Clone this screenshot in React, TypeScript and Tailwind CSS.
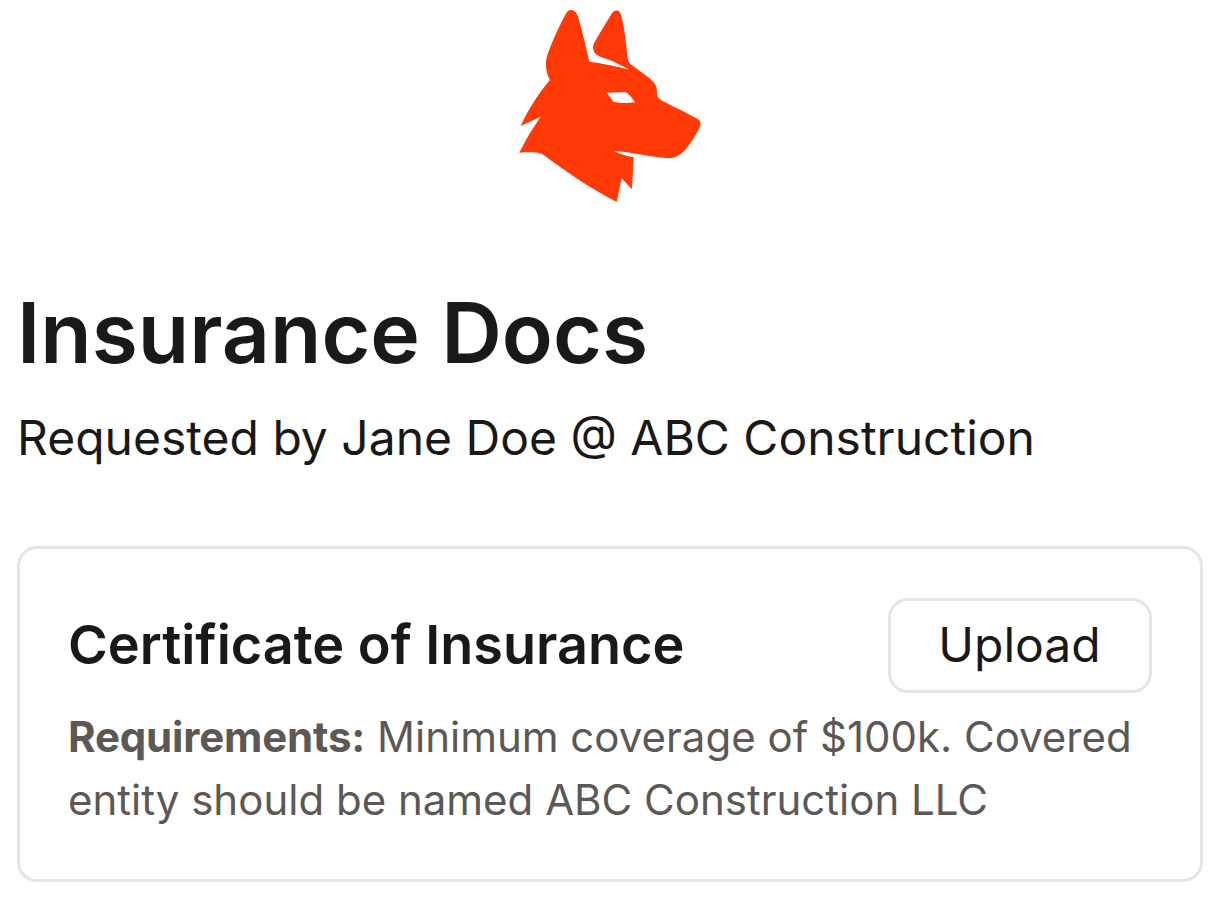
export default function App() {
  return (
    <div className="min-h-[902px] bg-white pl-[17px] pr-[17.5px] font-['Inter',sans-serif] text-[#1a1917]">
      {/* logo */}
      <div className="flex justify-center">
        <svg width="220" height="215" viewBox="0 0 660 645" className="block">
          <path
            fill="#ff3a06"
            d="M213 30 C226 30 232 42 236 56 C248 96 258 142 268 185 C310 191 350 198 387 209 C365 197 335 180 305 172 C285 166 273 150 282 130 C300 98 320 66 336 40 C344 28 358 28 363 44 C373 80 378 125 383 172 C384 186 392 194 402 200 C425 216 445 230 460 245 C470 256 472 268 471 282 C472 294 482 300 494 306 C530 324 562 340 592 356 C602 362 604 370 600 380 C590 400 576 424 560 444 C546 462 530 474 505 475 C450 470 395 456 340 452 C360 462 380 468 401 472 L396 568 L365 535 L350 605 C280 570 205 520 130 464 C118 456 90 456 58 458 C76 420 98 384 122 350 L62 378 C84 330 114 282 150 240 C138 220 134 190 142 165 C158 120 178 78 196 44 C201 34 206 30 213 30 Z M321 278 L340 305 C360 310 385 310 405 307 C398 296 388 284 378 277 C360 276 340 277 321 278 Z"
            fillRule="evenodd"
          />
        </svg>
      </div>

      <h1 className="mt-[68px] text-[84px] leading-[100px] font-semibold">Insurance Docs</h1>
      <p className="mt-[25px] text-[48px] leading-[60px]">Requested by Jane Doe @ ABC Construction</p>

      <div className="mt-[78px] h-[336px] rounded-[20px] border-[3px] border-[#e7e5e4] px-[48px] pt-[49px]">
        <div className="flex items-start justify-between">
          <h2 className="mt-[15px] text-[54px] leading-[64px] font-semibold">Certificate of Insurance</h2>
          <button className="h-[95px] w-[264px] rounded-[20px] border-[3px] border-[#e7e5e4] pb-[2px] text-[48px]">Upload</button>
        </div>
        <p className="mt-[12px] text-[42px] leading-[63px] text-[#5c5855]">
          <span className="font-bold tracking-[-0.16px]">Requirements:</span> Minimum coverage of $100k. Covered entity should be named ABC Construction LLC
        </p>
      </div>
    </div>
  )
}
